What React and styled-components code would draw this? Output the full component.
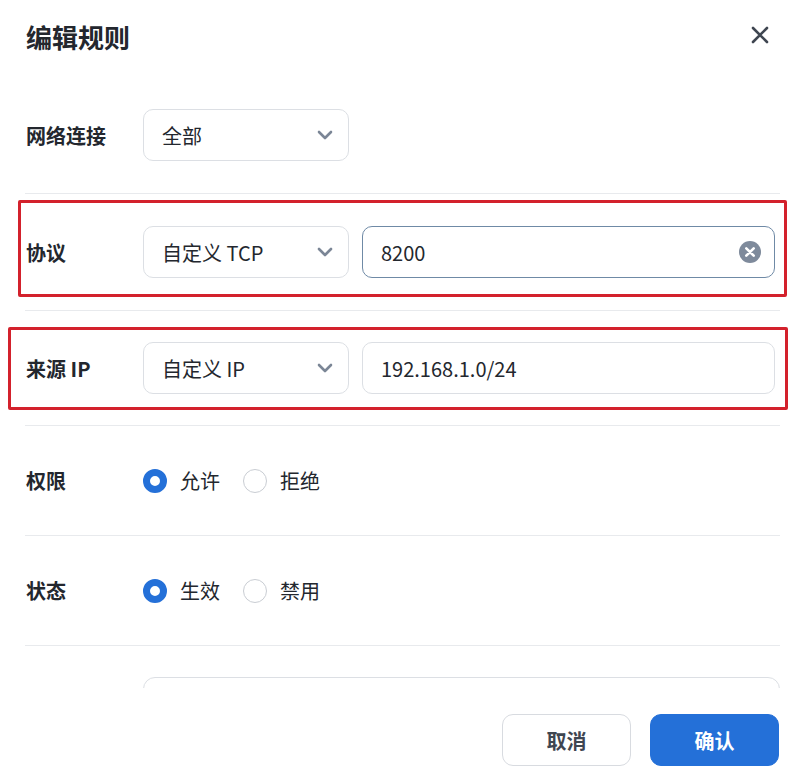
import React from "react";
import styled, { createGlobalStyle } from "styled-components";

const FONT = `"Noto Sans CJK SC", "Noto Sans", sans-serif`;

export default function App() {
  return (
    <>
      <GlobalStyle />
      <Dialog>
        <Header>
          <Title>编辑规则</Title>
          <CloseButton aria-label="关闭">
            <svg width="18" height="18" viewBox="0 0 18 18">
              <path d="M2 2 L16 16 M16 2 L2 16" stroke="#3f4651" strokeWidth="2.6" strokeLinecap="round" />
            </svg>
          </CloseButton>
        </Header>

        <Body>
          <Row>
            <Label>网络连接</Label>
            <Select value="全部" />
          </Row>

          <Row highlight={{ top: 6, right: -7, bottom: 13, left: -7 }}>
            <Label>协议</Label>
            <Select value="自定义 TCP" />
            <Input focused>
              <span>8200</span>
              <ClearIcon />
            </Input>
          </Row>

          <Row tight highlight={{ top: 16, right: -8, bottom: 15, left: -17 }}>
            <Label>来源 IP</Label>
            <Select value="自定义 IP" />
            <Input>
              <span>192.168.1.0/24</span>
            </Input>
          </Row>

          <Row compact>
            <Label>权限</Label>
            <RadioGroup options={["允许", "拒绝"]} checked={0} />
          </Row>

          <Row compact>
            <Label>状态</Label>
            <RadioGroup options={["生效", "禁用"]} checked={0} />
          </Row>

          <Row last>
            <Label />
            <TextArea />
          </Row>
        </Body>

        <Footer>
          <Button>取消</Button>
          <Button primary>确认</Button>
        </Footer>
      </Dialog>
    </>
  );
}

function Select({ value }) {
  return (
    <SelectBox>
      <span>{value}</span>
      <svg width="16" height="10" viewBox="0 0 16 10">
        <path d="M2 2 L8 8 L14 2" fill="none" stroke="#7b8696" strokeWidth="2.6" strokeLinecap="round" strokeLinejoin="round" />
      </svg>
    </SelectBox>
  );
}

function ClearIcon() {
  return (
    <svg width="22" height="22" viewBox="0 0 22 22">
      <circle cx="11" cy="11" r="11" fill="#7e8a9b" />
      <path d="M7.3 7.3 L14.7 14.7 M14.7 7.3 L7.3 14.7" stroke="#fff" strokeWidth="2.6" strokeLinecap="round" />
    </svg>
  );
}

function RadioGroup({ options, checked }) {
  return (
    <Radios>
      {options.map((opt, i) => (
        <RadioItem key={opt}>
          <RadioDot checked={i === checked} />
          {opt}
        </RadioItem>
      ))}
    </Radios>
  );
}

const GlobalStyle = createGlobalStyle`
  html, body {
    margin: 0;
    padding: 0;
    background: #fff;
  }
  body {
    font-family: ${FONT};
    color: #1f2329;
  }
`;

const Dialog = styled.div`
  width: 800px;
  height: 776px;
  display: flex;
  flex-direction: column;
  background: #fff;
  overflow: hidden;
`;

const Header = styled.div`
  height: 77px;
  flex: none;
  display: flex;
  align-items: flex-start;
  justify-content: space-between;
  padding: 0 31px 0 26px;
  box-sizing: border-box;
`;

const Title = styled.h1`
  margin: 19px 0 0;
  font-size: 26px;
  line-height: 36px;
  font-weight: 700;
  color: #23272e;
`;

const CloseButton = styled.button`
  margin-top: 26px;
  padding: 0;
  border: 0;
  background: none;
  width: 18px;
  height: 18px;
  display: flex;
`;

const Body = styled.div`
  flex: 1;
  min-height: 0;
  overflow: hidden;
  padding: 0 20px 0 25px;
`;

const Row = styled.div`
  position: relative;
  display: flex;
  align-items: center;
  gap: 13px;
  padding: ${p => (p.last ? "31px 0 0" : p.tight ? "31px 0 31px" : "32px 0 32px")};
  min-height: ${p => (p.compact ? "45px" : "52px")};
  border-bottom: ${p => (p.last ? "none" : "1px solid #e8eaed")};

  &::after {
    content: "";
    display: ${p => (p.highlight ? "block" : "none")};
    position: absolute;
    top: ${p => p.highlight?.top ?? 0}px;
    right: ${p => p.highlight?.right ?? 0}px;
    bottom: ${p => p.highlight?.bottom ?? 0}px;
    left: ${p => p.highlight?.left ?? 0}px;
    border: 3px solid #d3212c;
    border-radius: 2px;
    pointer-events: none;
  }
`;

const Label = styled.div`
  width: 104px;
  flex: none;
  padding-left: 1px;
  font-size: 20px;
  font-weight: 700;
  color: #23272e;
  white-space: nowrap;
`;

const SelectBox = styled.div`
  width: 206px;
  height: 52px;
  flex: none;
  box-sizing: border-box;
  border: 1px solid #dcdfe4;
  border-radius: 10px;
  display: flex;
  align-items: center;
  justify-content: space-between;
  padding: 0 15px 0 18px;
  font-size: 20px;
  color: #23272e;
`;

const Input = styled.div`
  flex: 1;
  margin-right: 5px;
  height: 52px;
  box-sizing: border-box;
  border: 1px solid ${p => (p.focused ? "#6f8aa6" : "#dcdfe4")};
  border-radius: 10px;
  display: flex;
  align-items: center;
  justify-content: space-between;
  padding: 0 13px 0 18px;
  font-size: 20px;
  color: #23272e;
`;

const Radios = styled.div`
  display: flex;
  align-items: center;
  gap: 23px;
`;

const RadioItem = styled.label`
  display: flex;
  align-items: center;
  gap: 13px;
  font-size: 20px;
  color: #23272e;
`;

const RadioDot = styled.span`
  width: 24px;
  height: 24px;
  box-sizing: border-box;
  border-radius: 50%;
  border: ${p => (p.checked ? "7px solid #2470d8" : "1px solid #c9cdd3")};
  background: #fff;
`;

const TextArea = styled.div`
  flex: 1;
  height: 80px;
  box-sizing: border-box;
  border: 1px solid #dcdfe4;
  border-radius: 12px;
`;

const Footer = styled.div`
  flex: none;
  height: 88px;
  box-sizing: border-box;
  padding: 26px 21px 10px 0;
  display: flex;
  justify-content: flex-end;
  gap: 19px;
  background: #fff;
`;

const Button = styled.button`
  width: 129px;
  height: 52px;
  box-sizing: border-box;
  border-radius: 11px;
  font-family: ${FONT};
  font-size: 20px;
  font-weight: 700;
  border: 1px solid ${p => (p.primary ? "#2470d8" : "#d8dbe0")};
  background: ${p => (p.primary ? "#2470d8" : "#fff")};
  color: ${p => (p.primary ? "#fff" : "#3f4651")};
`;
